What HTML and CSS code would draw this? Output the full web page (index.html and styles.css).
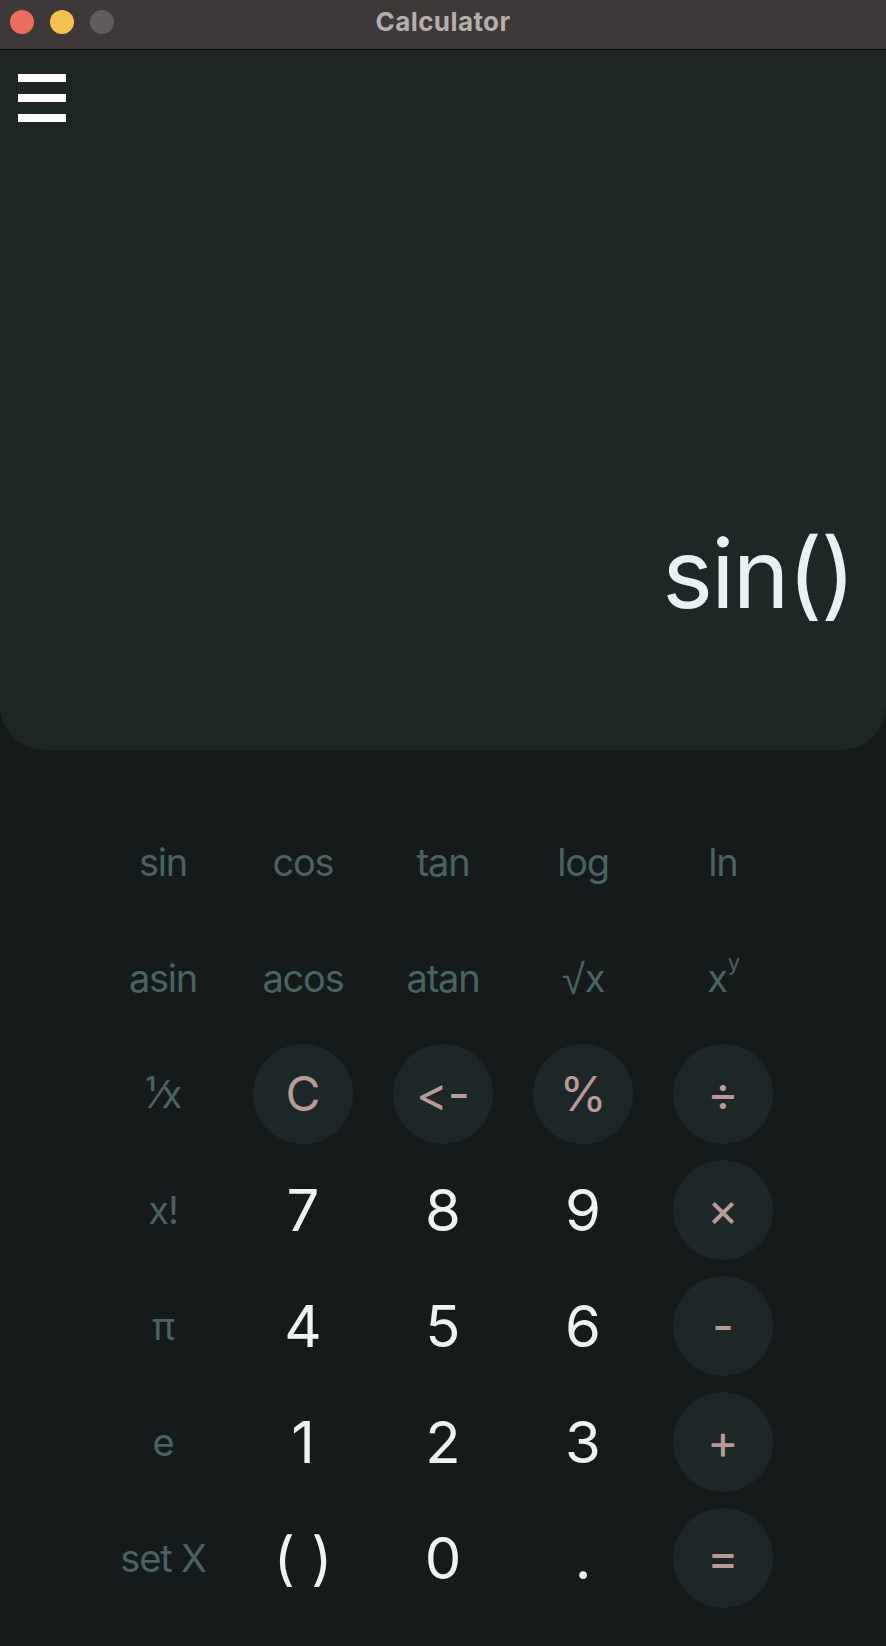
FILE: index.html
```html
<!DOCTYPE html>
<html lang="en">
<head>
<meta charset="utf-8">
<title>Calculator</title>
<link rel="stylesheet" href="styles.css">
</head>
<body>
<div class="window">
  <header class="titlebar">
    <div class="lights">
      <span class="light red"></span>
      <span class="light yellow"></span>
      <span class="light grey"></span>
    </div>
    <div class="title">Calculator</div>
    <div class="spacer"></div>
  </header>
  <section class="display">
    <div class="menu"><span></span><span></span><span></span></div>
    <div class="expr">sin()</div>
  </section>
  <main class="keypad">
    <div class="key fn">sin</div>
    <div class="key fn">cos</div>
    <div class="key fn">tan</div>
    <div class="key fn">log</div>
    <div class="key fn">ln</div>

    <div class="key fn">asin</div>
    <div class="key fn">acos</div>
    <div class="key fn">atan</div>
    <div class="key fn"><span class="root">√</span>x</div>
    <div class="key fn">x<sup class="sup">y</sup></div>

    <div class="key fn">¹⁄x</div>
    <div class="key op"><span class="pill">C</span></div>
    <div class="key op"><span class="pill">&lt;-</span></div>
    <div class="key op"><span class="pill">%</span></div>
    <div class="key op"><span class="pill">÷</span></div>

    <div class="key fn">x!</div>
    <div class="key num">7</div>
    <div class="key num">8</div>
    <div class="key num">9</div>
    <div class="key op"><span class="pill">×</span></div>

    <div class="key fn">π</div>
    <div class="key num">4</div>
    <div class="key num">5</div>
    <div class="key num">6</div>
    <div class="key op"><span class="pill">-</span></div>

    <div class="key fn">e</div>
    <div class="key num">1</div>
    <div class="key num">2</div>
    <div class="key num">3</div>
    <div class="key op"><span class="pill">+</span></div>

    <div class="key fn">set X</div>
    <div class="key num">( )</div>
    <div class="key num">0</div>
    <div class="key num">.</div>
    <div class="key op"><span class="pill">=</span></div>
  </main>
</div>
</body>
</html>
```

FILE: styles.css
```css
* { box-sizing: border-box; }

html, body {
  margin: 0;
  padding: 0;
  background: #151a1a;
}

body {
  font-family: Inter, "Noto Sans", "Liberation Sans", sans-serif;
  font-feature-settings: "calt" 0;
  font-variant-ligatures: none;
  width: 886px;
  height: 1646px;
  overflow: hidden;
}

.window {
  display: flex;
  flex-direction: column;
  height: 1646px;
}

.titlebar {
  height: 50px;
  background: #3e3838;
  border-bottom: 1px solid #0f0f0f;
  display: grid;
  grid-template-columns: 1fr auto 1fr;
  align-items: center;
  padding: 0 0 6px 0;
}

.lights {
  display: flex;
  gap: 16px;
  margin-left: 10px;
}

.light {
  width: 24px;
  height: 24px;
  border-radius: 50%;
  display: block;
}
.light.red { background: #ee6b60; }
.light.yellow { background: #f5c150; }
.light.grey { background: #615b5b; }

.title {
  color: #b4afaf;
  font-weight: 700;
  font-size: 26px;
  line-height: 1;
  letter-spacing: 0.4px;
}

.display {
  height: 700px;
  background: #1e2626;
  border-radius: 0 0 44px 44px;
  display: flex;
  flex-direction: column;
  padding: 24px 32px 129px 18px;
}

.menu {
  display: flex;
  flex-direction: column;
  gap: 12px;
}
.menu span {
  display: block;
  width: 48px;
  height: 8px;
  background: #ffffff;
}

.expr {
  margin-top: auto;
  align-self: flex-end;
  color: #e9f1f2;
  font-size: 96px;
  line-height: 1;
  letter-spacing: -1.8px;
}

.keypad {
  display: grid;
  grid-template-columns: repeat(5, 140px);
  grid-auto-rows: 116px;
  justify-content: center;
  padding-top: 54px;
}

.key {
  display: flex;
  align-items: center;
  justify-content: center;
  line-height: 1;
}

.fn {
  color: #4a6262;
  font-size: 38px;
  letter-spacing: -1.2px;
}

.root {
  font-family: "DejaVu Sans", sans-serif;
  font-weight: 200;
  font-size: 42px;
  position: relative;
  top: 2px;
  margin-right: 1px;
}

.sup {
  font-size: 22px;
  vertical-align: 0;
  position: relative;
  top: -16px;
  margin-left: 1px;
}

.num {
  color: #eef3f3;
  font-size: 58px;
}

.op .pill {
  width: 100px;
  height: 100px;
  border-radius: 50%;
  background: #1e2727;
  color: #b89a98;
  font-size: 48px;
  display: flex;
  align-items: center;
  justify-content: center;
  line-height: 1;
}
```
